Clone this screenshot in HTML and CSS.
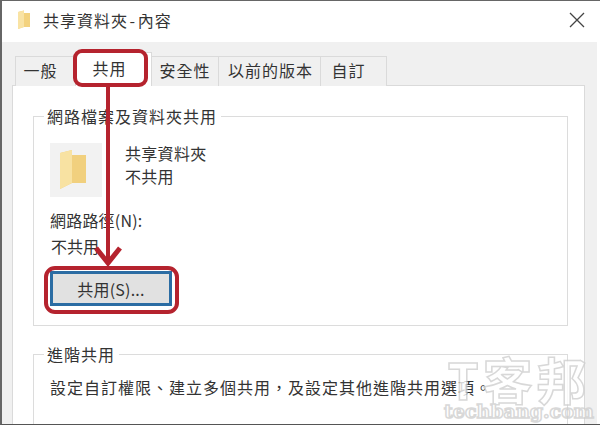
FILE: index.html
```html
<!DOCTYPE html>
<html lang="zh-Hant">
<head>
    <meta charset="UTF-8">
    <title>共享資料夾 - 內容</title>
    <link rel="stylesheet" href="styles.css">
</head>
<body>
<div class="window">
    <div class="titlebar">
        <svg class="titleicon" width="14" height="20" viewBox="0 0 14 20">
            <path d="M1 2 L7 0.5 L7 3 L13 3 L13 17 L7 17 L1 19 Z" fill="#f3d27e"/>
            <path d="M1 2 L7 0.5 L7 17 L1 19 Z" fill="#f9e3a4"/>
        </svg>
        <span class="titletext">共享資料夾 - 內容</span>
        <svg class="closeicon" width="16" height="16" viewBox="0 0 16 16">
            <path d="M1 1 L15 15 M15 1 L1 15" stroke="#444" stroke-width="1.3" fill="none"/>
        </svg>
    </div>
    <div class="body">
        <div class="tabs">
            <div class="tab tab1">一般</div>
            <div class="tab tab2 active">共用</div>
            <div class="tab tab3">安全性</div>
            <div class="tab tab4">以前的版本</div>
            <div class="tab tab5">自訂</div>
        </div>
        <div class="panel">
            <fieldset class="group group1">
                <legend>網路檔案及資料夾共用</legend>
                <div class="filerow">
                    <div class="tile">
                        <svg class="tilefolder" width="26" height="40" viewBox="0 0 26 40">
                            <path d="M0 3 L12 0 L12 5 L26 5 L26 33 L12 33 L0 39 Z" fill="#f1d07e"/>
                            <path d="M0 3 L12 0 L12 33 L0 39 Z" fill="#f8e2a2"/>
                        </svg>
                    </div>
                    <div class="fileinfo">
                        <div>共享資料夾</div>
                        <div>不共用</div>
                    </div>
                </div>
                <div class="pathlabel">網路路徑(N):</div>
                <div class="pathvalue">不共用</div>
                <button class="sharebtn">共用(S)...</button>
            </fieldset>
            <fieldset class="group group2">
                <legend>進階共用</legend>
                <p class="advanced">設定自訂權限、建立多個共用，及設定其他進階共用選項。</p>
            </fieldset>
        </div>
    </div>

    <div class="mark mark-tab"></div>
    <div class="mark mark-btn"></div>
    <svg class="mark arrow" width="40" height="185" viewBox="0 0 40 185">
        <path d="M20 0 V176" stroke="#b5232e" stroke-width="4" fill="none"/>
        <path d="M8 162 L20 177 L32 162" stroke="#b5232e" stroke-width="5" fill="none"/>
    </svg>

    <div class="watermark">
        <div class="wm-big">T客邦</div>
        <div class="wm-small">techbang.com</div>
    </div>
</div>
</body>
</html>
```

FILE: styles.css
```css
* {
    box-sizing: border-box;
}

body {
    margin: 0;
    font-family: "Noto Sans CJK TC", "Liberation Sans", sans-serif;
    color: #333;
    font-size: 16px;
}

.window {
    position: relative;
    width: 600px;
    height: 425px;
    overflow: hidden;
    background: #fff;
    border-top: 1px solid #666;
    border-left: 2px solid #666;
    border-bottom: 1px solid #555;
    display: flex;
    flex-direction: column;
}

.titlebar {
    height: 41px;
    flex: none;
    display: flex;
    align-items: center;
    padding: 0 15px 3px 15px;
}

.titleicon {
    margin-right: 12px;
}

.titletext {
    letter-spacing: 1px;
    word-spacing: -3px;
    line-height: 1;
    flex: 1;
}

.body {
    flex: 1;
    min-height: 0;
    margin-right: 3px;
    background: #f0f0f0;
    padding: 14px 12px 0 10px;
    display: flex;
    flex-direction: column;
}

.tabs {
    display: flex;
    height: 30px;
    flex: none;
    padding-left: 3px;
    position: relative;
    z-index: 1;
}

.tab {
    border: 1px solid #dadada;
    border-left: none;
    border-bottom: none;
    text-align: center;
    line-height: 26px;
    letter-spacing: 1px;
    background: #f0f0f0;
}

.tab1 { width: 61px; border-left: 1px solid #dadada; padding-right: 10px; }
.tab2 { width: 76px; padding-right: 8px; }
.tab3 { width: 67px; }
.tab4 { width: 102px; padding-left: 2px; }
.tab5 { width: 66px; padding-right: 10px; }

.tab.active {
    background: #fff;
    height: 34px;
    margin-top: -4px;
    line-height: 31px;
}

.panel {
    flex: 1;
    min-height: 0;
    background: #fff;
    border: 1px solid #dadada;
    border-bottom: none;
    margin-top: -1px;
    padding: 20px 16px 0 20px;
    overflow: hidden;
}

.group {
    margin: 0;
    padding: 0;
    border: 1px solid #dcdcdc;
}

.group legend {
    margin-left: -6px;
    padding: 0 4px 0 3px;
    letter-spacing: 1px;
    line-height: 20px;
}

.group1 {
    height: 220px;
    padding: 17px 0 0 16px;
}

.filerow {
    display: flex;
    gap: 23px;
}

.tile {
    width: 52px;
    height: 54px;
    background: #f2f2f2;
    display: flex;
    align-items: center;
    justify-content: center;
}

.tilefolder {
    margin-right: 6px;
}

.fileinfo {
    line-height: 23px;
    letter-spacing: 0.3px;
    margin-top: -1px;
}

.pathlabel {
    margin-top: 12px;
    line-height: 22px;
    letter-spacing: 0.2px;
}

.pathvalue {
    margin-top: 4px;
    margin-left: 1px;
    line-height: 22px;
}

.sharebtn {
    display: block;
    margin-top: 14px;
    width: 122px;
    height: 35px;
    background: #e1e1e1;
    border: 3px solid #2b6ca3;
    color: #333;
    font: inherit;
    letter-spacing: 0.2px;
    padding: 0;
}

.group2 {
    margin-top: 18px;
    height: 90px;
    padding: 12px 0 0 16px;
}

.advanced {
    margin: 0;
    letter-spacing: 1px;
    line-height: 22px;
    white-space: nowrap;
}

/* red annotations on top of the screenshot */
.mark {
    z-index: 2;
}

.mark-tab {
    position: absolute;
    left: 71px;
    top: 48px;
    width: 75px;
    height: 38px;
    border: 4px solid #b5232e;
    border-radius: 9px;
}

.mark-btn {
    position: absolute;
    left: 42px;
    top: 265px;
    width: 135px;
    height: 48px;
    border: 4px solid #b5232e;
    border-radius: 11px;
}

.arrow {
    position: absolute;
    left: 86px;
    top: 85px;
}

.watermark {
    position: absolute;
    z-index: 3;
    right: 2px;
    bottom: 2px;
    width: 158px;
    text-align: center;
    color: #fff;
    -webkit-text-stroke: 1.5px #cfcfcf;
    font-weight: 700;
    opacity: 0.8;
}

.wm-big {
    font-size: 50px;
    line-height: 44px;
    letter-spacing: 4px;
    white-space: nowrap;
}

.wm-small {
    font-family: "DejaVu Serif", serif;
    font-size: 19px;
    line-height: 22px;
    white-space: nowrap;
}
```
